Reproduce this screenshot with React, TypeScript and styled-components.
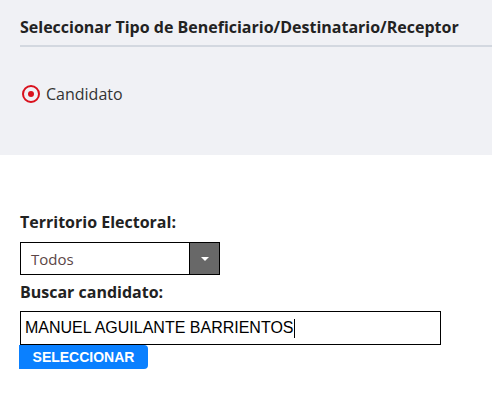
import React from 'react';
import styled, { createGlobalStyle } from 'styled-components';

const GlobalStyle = createGlobalStyle`
  body {
    margin: 0;
    background: #fff;
    font-family: 'Open Sans', sans-serif;
    color: #212529;
  }
`;

export const Panel = styled.section`
  background: #f0f1f5;
  height: 155px;
  padding: 16px 0 0 20px;
  box-sizing: border-box;
`;

export const PanelTitle = styled.h3`
  margin: 0;
  padding-bottom: 7px;
  font-size: 16px;
  line-height: 22px;
  font-weight: 700;
  color: #222;
  border-bottom: 2px solid #d3d8e0;
`;

export const RadioRow = styled.label`
  display: flex;
  align-items: center;
  gap: 6px;
  margin: 36px 0 0 2px;
  font-size: 16px;
  line-height: 22px;
  color: #333;
`;

export const RadioMark = styled.span`
  width: 18px;
  height: 18px;
  box-sizing: border-box;
  border: 2px solid #d9111d;
  border-radius: 50%;
  display: flex;
  align-items: center;
  justify-content: center;
  &::after {
    content: '';
    width: 6px;
    height: 6px;
    border-radius: 50%;
    background: #d9111d;
  }
`;

export const Form = styled.div`
  padding: 56px 0 0 20px;
  display: flex;
  flex-direction: column;
  align-items: flex-start;
`;

export const FieldLabel = styled.div`
  font-size: 16px;
  font-weight: 700;
  color: #222;
  line-height: 22px;
  margin-bottom: 8px;
`;

export const SelectBox = styled.div`
  width: 200px;
  height: 33px;
  box-sizing: border-box;
  border: 1px solid #000;
  display: flex;
  margin: 1px 0 6px;
`;

export const SelectValue = styled.div`
  flex: 1;
  padding-left: 10px;
  display: flex;
  align-items: center;
  font-size: 15px;
  color: #5b4646;
`;

export const SelectArrow = styled.div`
  width: 29px;
  background: #686868;
  border-left: 1px solid #000;
  display: flex;
  align-items: center;
  justify-content: center;
  &::after {
    content: '';
    border-left: 4px solid transparent;
    border-right: 4px solid transparent;
    border-top: 4px solid #fff;
  }
`;

export const TextInput = styled.div`
  width: 421px;
  height: 34px;
  box-sizing: border-box;
  border: 1px solid #000;
  padding-left: 4px;
  display: flex;
  align-items: center;
  font-family: 'Liberation Sans', Arial, sans-serif;
  font-size: 16px;
  color: #000;
`;

export const Caret = styled.span`
  display: inline-block;
  width: 1px;
  height: 19px;
  background: #000;
`;

export const SubmitButton = styled.button`
  width: 129px;
  height: 24px;
  margin-left: -1px;
  border: none;
  border-radius: 0 4px 4px 0;
  background: #0a80ff;
  color: #fff;
  font-family: 'Liberation Sans', Arial, sans-serif;
  font-weight: 700;
  font-size: 14px;
  padding: 0;
  text-align: center;
`;

const App = () => {
  return (
    <>
      <GlobalStyle />
      <Panel>
        <PanelTitle>Seleccionar Tipo de Beneficiario/Destinatario/Receptor</PanelTitle>
        <RadioRow>
          <RadioMark />
          Candidato
        </RadioRow>
      </Panel>
      <Form>
        <FieldLabel>Territorio Electoral:</FieldLabel>
        <SelectBox>
          <SelectValue>Todos</SelectValue>
          <SelectArrow />
        </SelectBox>
        <FieldLabel>Buscar candidato:</FieldLabel>
        <TextInput>
          MANUEL AGUILANTE BARRIENTOS
          <Caret />
        </TextInput>
        <SubmitButton>SELECCIONAR</SubmitButton>
      </Form>
    </>
  );
};

export default App;
